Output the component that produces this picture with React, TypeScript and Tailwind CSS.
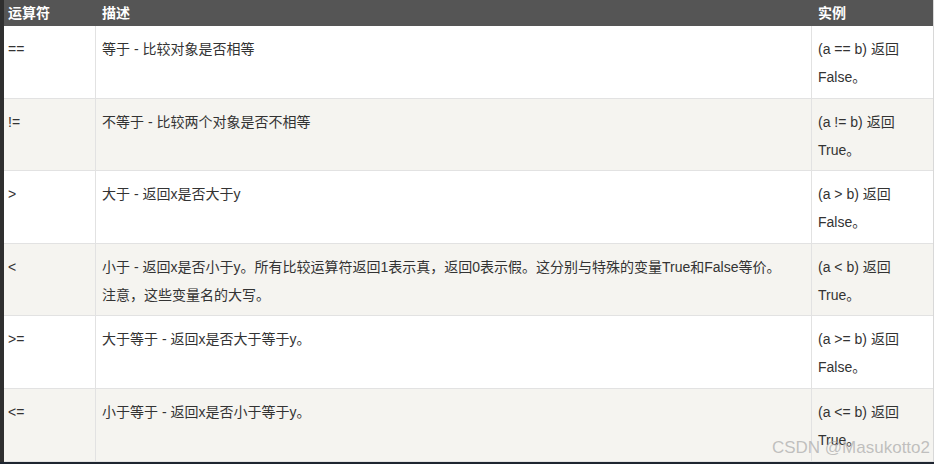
const rows = [
  { op: "==", desc: ["等于 - 比较对象是否相等"], ex: ["(a == b) 返回", "False。"] },
  { op: "!=", desc: ["不等于 - 比较两个对象是否不相等"], ex: ["(a != b) 返回", "True。"] },
  { op: ">", desc: ["大于 - 返回x是否大于y"], ex: ["(a > b) 返回", "False。"] },
  {
    op: "<",
    desc: [
      "小于 - 返回x是否小于y。所有比较运算符返回1表示真，返回0表示假。这分别与特殊的变量True和False等价。",
      "注意，这些变量名的大写。",
    ],
    ex: ["(a < b) 返回", "True。"],
  },
  { op: ">=", desc: ["大于等于 - 返回x是否大于等于y。"], ex: ["(a >= b) 返回", "False。"] },
  { op: "<=", desc: ["小于等于 - 返回x是否小于等于y。"], ex: ["(a <= b) 返回", "True。"] },
];

export default function App() {
  return (
    <div
      className="relative flex h-[464px] w-[934px] flex-col overflow-hidden bg-[#1e2530]"
      style={{ fontFamily: '"Liberation Sans", "Noto Sans CJK SC", sans-serif' }}
    >
      <div className="flex h-[462px]">
        {/* left dark strip */}
        <div className="w-[4px] bg-[#2f2f2f]" />

        <div className="flex flex-1 flex-col border-r border-[#d8d8d8] bg-white">
          {/* Header */}
          <div className="flex h-[26px] items-center bg-[#555555] text-[14px] font-bold text-white">
            <div className="w-[92px] px-[4px]">运算符</div>
            <div className="flex-1 px-[6px]">描述</div>
            <div className="w-[121px] px-[6px]">实例</div>
          </div>

          {rows.map((r, i) => (
            <div
              key={r.op}
              className={`flex h-[72.6px] border-b border-[#e2e2e2] text-[14px] leading-[28px] text-[#333333] ${
                i % 2 === 1 ? "bg-[#f5f4f0]" : "bg-white"
              }`}
            >
              <div className="w-[92px] border-r border-[#e2e2e2] px-[4px] pt-[9px]">{r.op}</div>
              <div className="flex-1 border-r border-[#e2e2e2] px-[6px] pt-[9px]">
                {r.desc.map((d) => (
                  <div key={d} className="whitespace-nowrap">
                    {d}
                  </div>
                ))}
              </div>
              <div className="w-[121px] px-[6px] pt-[9px]">
                {r.ex.map((e) => (
                  <div key={e} className="whitespace-nowrap">
                    {e}
                  </div>
                ))}
              </div>
            </div>
          ))}
        </div>
      </div>

      {/* watermark */}
      <div className="pointer-events-none absolute bottom-[8px] right-[4px] text-[17px] leading-none text-[#a8a8a8]/70">
        CSDN @Masukotto2
      </div>
    </div>
  );
}
